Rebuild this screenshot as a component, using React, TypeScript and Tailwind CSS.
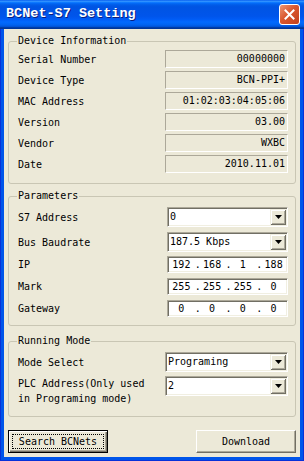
import { Fragment } from "react";

const sunken =
  "border border-t-[#ACA899] border-l-[#ACA899] border-b-white border-r-white shadow-[inset_1px_1px_0_#716F64,inset_-1px_-1px_0_#F1EFE2]";

function Group({ title, className, children }: { title: string; className?: string; children: React.ReactNode }) {
  return (
    <div className={`mx-[4px] rounded-[3px] border border-[#C9C6B4] pl-[9px] pr-[7px] ${className ?? ""}`}>
      <div className="-mt-[7px] -ml-[1px] w-fit bg-[#ECE9D8] px-[1px] leading-[12px]">{title}</div>
      {children}
    </div>
  );
}

function ReadOnly({ label, value }: { label: string; value: string }) {
  return (
    <div className="flex h-[18px] items-center justify-between">
      <span>{label}</span>
      <div className="h-[18px] w-[123px] border border-t-[#ACA899] border-l-[#ACA899] border-b-white border-r-white pr-[2px] text-right leading-[16px]">
        {value}
      </div>
    </div>
  );
}

function Combo({ value, w = "w-[121px]" }: { value: string; w?: string }) {
  return (
    <div className={`flex h-[20px] ${w} items-center bg-white p-[1px] ${sunken}`}>
      <span className="flex-1 pl-[1px] leading-[16px]">{value}</span>
      <div className="flex h-[16px] w-[16px] items-center justify-center bg-[#ECE9D8] shadow-[inset_1px_1px_0_#F1EFE2,inset_-1px_-1px_0_#716F64,inset_2px_2px_0_#fff,inset_-2px_-2px_0_#ACA899]">
        <svg width="7" height="4" viewBox="0 0 7 4">
          <path d="M0 0h7L3.5 4z" fill="#000" />
        </svg>
      </div>
    </div>
  );
}

function IpField({ parts }: { parts: string[] }) {
  return (
    <div className={`flex h-[17px] w-[121px] items-center bg-white leading-[15px] ${sunken}`}>
      {parts.map((p, i) => (
        <Fragment key={i}>
          {i > 0 && <span className="w-[4px] text-center">.</span>}
          <span className="flex-1 text-center">{p}</span>
        </Fragment>
      ))}
    </div>
  );
}

export default function App() {
  const info = [
    ["Serial Number", "00000000"],
    ["Device Type", "BCN-PPI+"],
    ["MAC Address", "01:02:03:04:05:06"],
    ["Version", "03.00"],
    ["Vendor", "WXBC"],
    ["Date", "2010.11.01"],
  ];

  return (
    <div className="flex h-[461px] w-[304px] flex-col bg-[#0055EA] font-['DejaVu_Sans_Mono','Noto_Sans_CJK_SC',monospace] text-[10px] text-black shadow-[inset_1px_0_0_#0831D9,inset_-1px_0_0_#0831D9,inset_0_-1px_0_#0831D9]">
      {/* title bar */}
      <div className="flex h-[29px] shrink-0 items-center justify-between bg-[linear-gradient(180deg,#0058EE_0%,#3593FF_4%,#288EFF_6%,#127DFF_8%,#036FFC_10%,#0262EE_14%,#0057E5_20%,#0054E3_24%,#0055EB_56%,#005BF5_66%,#026AFE_76%,#0062EF_86%,#0052D6_92%,#0040AB_94%,#003092_100%)] pl-[6px] pr-[4px]">
        <span className="font-['Liberation_Mono',monospace] text-[13.5px] font-bold text-white [text-shadow:1px_1px_0_#0A1E80]">
          BCNet-S7 Setting
        </span>
        <div className="flex h-[21px] w-[21px] items-center justify-center rounded-[3px] border border-white bg-[linear-gradient(135deg,#EC9674_0%,#D9572E_45%,#C2401C_100%)]">
          <svg width="11" height="11" viewBox="0 0 11 11">
            <path d="M1.5 1.5l8 8M9.5 1.5l-8 8" stroke="#fff" strokeWidth="2" strokeLinecap="square" />
          </svg>
        </div>
      </div>

      {/* client */}
      <div className="mx-[4px] mb-[4px] flex flex-1 flex-col bg-[#ECE9D8]">
        <Group title="Device Information" className="mt-[12px] pb-[10px]">
          <div className="mt-[3px] flex flex-col gap-[3px]">
            {info.map(([l, v]) => (
              <ReadOnly key={l} label={l} value={v} />
            ))}
          </div>
        </Group>

        <Group title="Parameters" className="mt-[12px] pb-[8px]">
          <div className="mt-[5px] flex h-[20px] items-center justify-between">
            <span>S7 Address</span>
            <Combo value="0" />
          </div>
          <div className="mt-[5px] flex h-[20px] items-center justify-between">
            <span>Bus Baudrate</span>
            <Combo value="187.5 Kbps" />
          </div>
          <div className="mt-[4px] flex h-[17px] items-center justify-between">
            <span>IP</span>
            <IpField parts={["192", "168", "1", "188"]} />
          </div>
          <div className="mt-[5px] flex h-[17px] items-center justify-between">
            <span>Mark</span>
            <IpField parts={["255", "255", "255", "0"]} />
          </div>
          <div className="mt-[5px] flex h-[17px] items-center justify-between">
            <span>Gateway</span>
            <IpField parts={["0", "0", "0", "0"]} />
          </div>
        </Group>

        <Group title="Running Mode" className="mt-[15px] pb-[10px]">
          <div className="mt-[5px] flex h-[20px] items-center justify-between">
            <span>Mode Select</span>
            <Combo value="Programing" w="w-[123px]" />
          </div>
          <div className="mt-[4px] flex items-start justify-between">
            <span className="leading-[15px]">
              PLC Address(Only used
              <br />
              in Programing mode)
            </span>
            <Combo value="2" w="w-[123px]" />
          </div>
        </Group>

        <div className="mx-[4px] mt-[13px] flex justify-between">
          <button className="h-[23px] w-[100px] border border-black bg-[#ECE9D8] leading-[21px] shadow-[inset_1px_1px_0_#fff,inset_-1px_-1px_0_#716F64,inset_-2px_-2px_0_#ACA899] outline-1 outline-offset-[-5px] outline-dotted outline-black">
            Search BCNets
          </button>
          <button className="h-[23px] w-[100px] border border-t-white border-l-white border-b-[#716F64] border-r-[#716F64] bg-[#ECE9D8] leading-[21px] shadow-[inset_-1px_-1px_0_#ACA899]">
            Download
          </button>
        </div>
      </div>
    </div>
  );
}
